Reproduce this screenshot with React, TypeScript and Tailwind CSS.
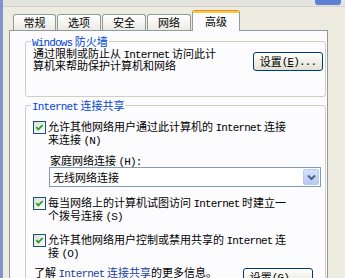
import type { ReactNode } from "react";

// latin runs in the dialog are half-width mono glyphs
const L = ({ children }: { children: ReactNode }) => (
  <span className="font-['Liberation_Mono',monospace] text-[11px] leading-[8px] tracking-[-0.85px]">{children}</span>
);

const Check = () => (
  <span className="mt-[1px] flex h-[13px] w-[13px] shrink-0 items-center justify-center border border-[#1c5180] bg-linear-to-br from-[#dcdcd7] to-white">
    <svg width="9" height="9" viewBox="0 0 9 9">
      <path d="M1.3 4.2 L3.4 6.4 L7.6 2" fill="none" stroke="#21a121" strokeWidth="1.8" />
    </svg>
  </span>
);

const XpButton = ({ hot }: { hot: string }) => (
  <button className="flex h-[19px] w-[70px] shrink-0 items-center justify-center rounded-[3px] border border-[#003c74] bg-linear-to-b from-white to-[#e2e0d4] text-[11px] leading-none text-black">
    设置
    <L>
      (<u>{hot}</u>)...
    </L>
  </button>
);

const Tab = ({ label, width }: { label: string; width: string }) => (
  <div
    className={`${width} flex h-[16px] items-center justify-center rounded-t-[3px] border border-b-0 border-[#919b9c] bg-linear-to-b from-white to-[#ebeae4] leading-none`}
  >
    {label}
  </div>
);

export default function App() {
  return (
    <div className="flex h-[278px] w-[345px] overflow-hidden bg-[#eeece1] font-['Noto_Sans_CJK_SC',sans-serif] text-[11px] text-black">
      <div className="w-[3px] shrink-0 bg-[#8293cc]" />
      <div className="flex flex-1 flex-col">
        <div className="flex h-[7px] shrink-0 justify-end border-b border-[#d3d2ca] bg-[#e4e3de] pr-[4px]">
          <div className="h-[5px] w-[26px] rounded-b-[3px] bg-[#5d7fd4]" />
        </div>

        <div className="flex h-[23px] shrink-0 items-end gap-[1px] pl-[10px]">
          <Tab label="常规" width="w-[43px]" />
          <Tab label="选项" width="w-[44px]" />
          <Tab label="安全" width="w-[44px]" />
          <Tab label="网络" width="w-[44px]" />
          <div className="relative z-10 -mb-[1px] flex h-[21px] w-[48px] items-center justify-center rounded-t-[3px] border border-b-0 border-[#919b9c] border-t-[#e68b2c] bg-[#fcfcfe] leading-none">
            <div className="absolute inset-x-0 top-0 h-[2px] bg-[#ffc83c]" />
            高级
          </div>
        </div>

        <div className="ml-[6px] w-[319px] flex-1 border border-[#919b9c] bg-[#fcfcfe] px-[15px] pt-[4px]">
          <fieldset className="h-[62px] w-[301px] rounded-[3px] border border-[#d0d0bf] pl-[7px] pr-[2px]">
            <legend className="-ml-[2px] px-[1px] leading-[12px] text-[#0046d5]">
              <L>Windows</L> 防火墙
            </legend>
            <div className="flex items-start justify-between">
              <p className="leading-[12px]">
                通过限制或防止从 <L>Internet</L> 访问此计
                <br />
                算机来帮助保护计算机和网络
              </p>
              <div className="mt-[5px]">
                <XpButton hot="E" />
              </div>
            </div>
          </fieldset>

          <fieldset className="mt-[2px] w-[301px] rounded-[3px] border border-[#d0d0bf] pl-[7px] pr-[2px] pb-[10px]">
            <legend className="-ml-[2px] px-[1px] leading-[12px] text-[#0046d5]">
              <L>Internet</L> 连接共享
            </legend>

            <div className="mt-[9px] flex items-start gap-[2px] leading-[13px]">
              <Check />
              <p>
                允许其他网络用户通过此计算机的 <L>Internet</L> 连接
                <br />
                来连接 <L>(N)</L>
              </p>
            </div>

            <p className="mt-[8px] pl-[17px] leading-[12px]">
              家庭网络连接 <L>(H):</L>
            </p>
            <div className="ml-[16px] mt-[1px] flex h-[20px] w-[272px] items-center border border-[#7f9db9] bg-white pl-[3px] pr-[1px]">
              <span className="flex-1">无线网络连接</span>
              <span className="flex h-[16px] w-[16px] items-center justify-center rounded-[2px] border border-[#b6c8f4] bg-linear-to-b from-[#d6e2fd] to-[#b5c9f6]">
                <svg width="9" height="7" viewBox="0 0 9 7">
                  <path d="M1 1.5 L4.5 5 L8 1.5" fill="none" stroke="#4d6185" strokeWidth="2" />
                </svg>
              </span>
            </div>

            <div className="mt-[9px] flex items-start gap-[2px] leading-[13px]">
              <Check />
              <p>
                每当网络上的计算机试图访问 <L>Internet</L> 时建立一
                <br />
                个拨号连接 <L>(S)</L>
              </p>
            </div>

            <div className="mt-[11px] flex items-start gap-[2px] leading-[13px]">
              <Check />
              <p>
                允许其他网络用户控制或禁用共享的 <L>Internet</L> 连
                <br />
                接 <L>(O)</L>
              </p>
            </div>

            <div className="mt-[7px] flex items-start justify-between pl-[1px] pr-[10px]">
              <p className="leading-[12px]">
                了解{" "}
                <a href="#" className="text-[#1d3f9e] underline">
                  <L>Internet</L> 连接共享
                </a>
                的更多信息。
              </p>
              <div className="mt-[2px]">
                <XpButton hot="G" />
              </div>
            </div>
          </fieldset>
        </div>
      </div>
    </div>
  );
}
